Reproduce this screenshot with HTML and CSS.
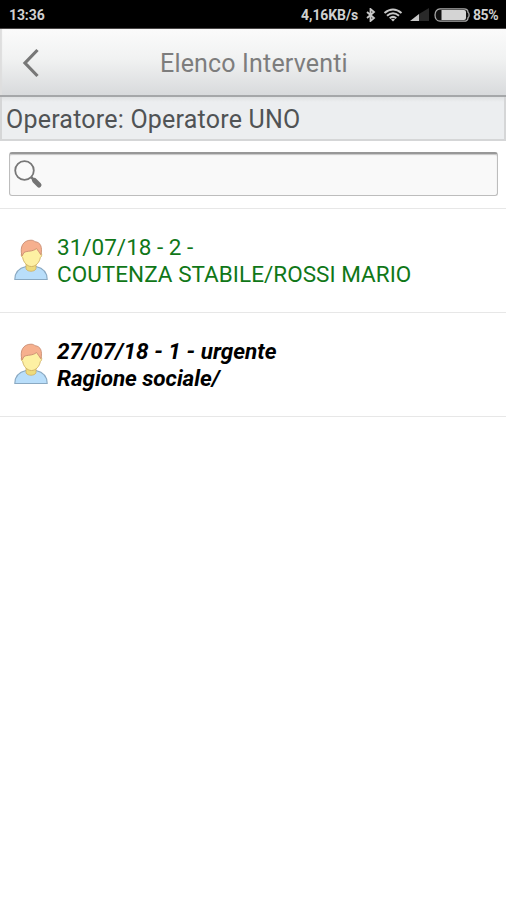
FILE: index.html
```html
<!DOCTYPE html>
<html lang="it">
<head>
<meta charset="utf-8">
<title>Elenco Interventi</title>
<link rel="stylesheet" href="styles.css">
</head>
<body>
<svg class="defs" aria-hidden="true">
  <symbol id="person" viewBox="0 0 34 42">
    <path d="M.800 40.500C.800 33 5.500 29 12 27.500h10c6.500 1.500 11.200 5.500 11.200 13z" fill="#b9defa" stroke="#8aa9c2" stroke-width="1.100"/>
    <path d="M12 23v7c2 3 8 3 10 0v-7z" fill="#eddb7c" stroke="#d0b063" stroke-width=".8"/>
    <path d="M8 14c0-7 4-10 9.500-10S27 8 27 14c1 0 1 4-.7 4.500-.6 4.500-4.300 9-8.800 9s-8.200-4.500-8.800-9C7 18 7 14 8 14z" fill="#fdf0a3" stroke="#cfb064" stroke-width=".9"/>
    <path d="M8 17C5.500 8 9 1.200 17 1.200c2 0 3 .6 4 1.500 6 .5 7.500 6 5.800 13l-2-3-2.300-3.200c-4 3.500-9 2-12.500 4z" fill="#f6b08e" stroke="#c98c72" stroke-width=".9"/>
  </symbol>
</svg>
<div class="status">
  <span class="clock">13:36</span>
  <span class="speed">4,16KB/s</span>
  <svg class="bluetooth" viewBox="0 0 10 14"><path d="M1 4l7 6-3.500 3V1L8 4l-7 6"/></svg>
  <svg class="wifi" viewBox="0 0 20 14"><path d="M1.500 5Q10-2 18.500 5M4 7.700q6-5 12 0M6.700 10.300q3.300-2.800 6.600 0"/><path class="solid" d="M8 11.500q2-1.500 4 0l-2 2z"/></svg>
  <svg class="signal" viewBox="0 0 19 13"><path d="M19 0v13H9V6z" fill="#292929"/><path d="M9 6v7H0z" fill="#c8c8c8"/></svg>
  <svg class="battery" viewBox="0 0 36 14"><path d="M6 .8h24c3 0 4 1.200 4 3.500 1.500.8 1.500 4.600 0 5.400 0 2.300-1 3.500-4 3.500H6C3 13.200 1 10.500 1 7S3 .8 6 .8z" fill="#111" stroke="#aaa" stroke-width="1.300"/><path d="M7.500 2H30q2 0 2 2v6q0 2-2 2H7.500z" fill="#d4d4d4"/></svg>
  <span class="percent">85%</span>
</div>
<header class="header">
  <svg class="back" viewBox="0 0 18 30"><path d="M15.500 2L3 15l12.500 13"/></svg>
  <h1>Elenco Interventi</h1>
</header>
<div class="operator"><span>Operatore: Operatore UNO</span></div>
<div class="search">
  <div class="field">
    <svg viewBox="0 0 30 30"><path d="M17 17l3 3" stroke="#777" stroke-width="2.500"/><path d="M20.500 20.500l4.500 4.500" stroke="#747474" stroke-width="5" stroke-linecap="round"/><circle cx="10.500" cy="10.500" r="9.300" fill="#fafafa" stroke="#777" stroke-width="1.800"/></svg>
  </div>
</div>
<main>
  <div class="item done">
    <svg class="person"><use href="#person"/></svg>
    <div class="text"><p class="date">31/07/18 - 2 -</p><p class="name">COUTENZA STABILE/ROSSI MARIO</p></div>
  </div>
  <div class="item urgent">
    <svg class="person"><use href="#person"/></svg>
    <div class="text"><p class="date">27/07/18 - 1 - urgente</p><p class="name">Ragione sociale/</p></div>
  </div>
</main>
</body>
</html>
```

FILE: styles.css
```css
* { box-sizing: border-box; }
body { margin: 0; min-height: 900px; background: #fff; font-family: Roboto, sans-serif; }
p, h1 { margin: 0; }
svg { flex: none; display: block; }
.defs { width: 0; height: 0; position: absolute; }
.status { height: 29px; padding: 1px 8px 0 9px; display: flex; align-items: center; background: #000; border-bottom: 1px solid #484545; color: #d0d0d0; font-size: 14px; font-weight: 700; }
.clock { letter-spacing: -.1px; }
.speed { margin-left: auto; letter-spacing: -.1px; }
.bluetooth { width: 10px; height: 14px; margin-left: 8px; fill: none; stroke: #c8c8c8; stroke-width: 1.8; }
.wifi { width: 20px; height: 14px; margin-left: 7px; fill: none; stroke: #c8c8c8; stroke-width: 2; }
.wifi .solid { fill: #c8c8c8; stroke: none; }
.signal { width: 19px; height: 13px; margin-left: 7px; }
.battery { width: 36px; height: 14px; margin-left: 5px; }
.percent { margin-left: 3px; letter-spacing: -.5px; }
.header { height: 68px; display: flex; align-items: center; border-bottom: 2px solid #a5a7a9; background: linear-gradient(#fbfbfb, #f1f2f2 45%, #d8dadc); box-shadow: inset 2px 0 1px #dedede; }
.back { width: 18px; height: 30px; margin-left: 22px; margin-top: 2px; fill: none; stroke: #777; stroke-width: 3.2; }
h1 { margin-left: 120px; margin-top: 2px; color: #7d7d7d; font-size: 25px; font-weight: 400; letter-spacing: .17px; white-space: nowrap; }
.operator { height: 44px; padding: 2px 0 0 4px; display: flex; align-items: center; border: solid #d5d6d7; border-width: 0 2px 2px; background: linear-gradient(#dfe1e2, #eceef0 5px); color: #505355; font-size: 25px; letter-spacing: .22px; }
.search { height: 68px; padding: 11px 8px 0 9px; border-bottom: 1px solid #e7e7e7; }
.field { height: 44px; padding: 6px 0 0 4px; border: 1px solid #bdbdbd; border-top: 2px solid #989898; border-radius: 3px; background: #f9f9f9; box-shadow: inset 0 1px 1px #c5c5c5; }
.field svg { width: 30px; height: 30px; }
.item { display: flex; height: 104px; padding: 25px 0 0 14px; border-bottom: 1px solid #e7e7e7; }
.person { width: 34px; height: 42px; margin-top: 5px; }
.text { margin-left: 9px; font-size: 22.5px; line-height: 26.5px; white-space: nowrap; }
.done { color: #107718; }
.done .name { letter-spacing: .03px; }
.urgent { color: #000; font-weight: 700; font-style: italic; }
.urgent .date { letter-spacing: .03px; }
.urgent .name { letter-spacing: -.07px; }
```
